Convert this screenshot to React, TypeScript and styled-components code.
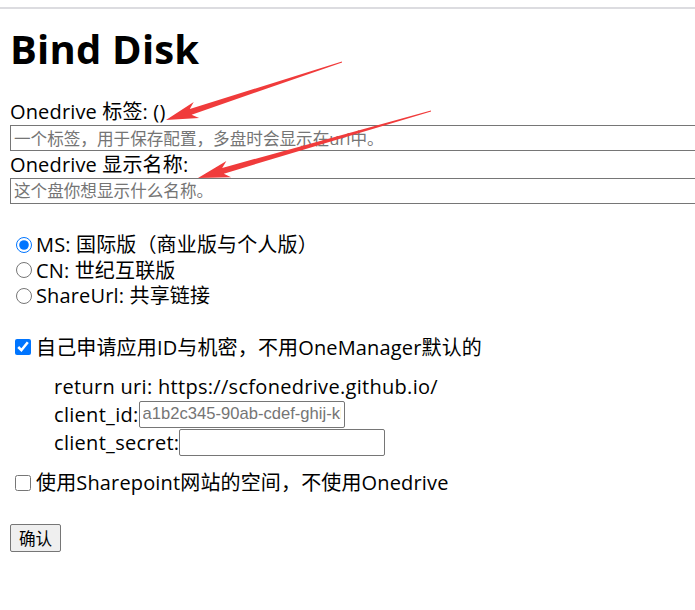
import React from "react"
import styled, { createGlobalStyle } from "styled-components"

const GlobalStyle = createGlobalStyle`
  html, body {
    margin: 0;
    padding: 0;
    background: #ffffff;
    overflow: hidden;
  }
  body {
    font-family: "Open Sans", "Noto Sans CJK SC", sans-serif;
    font-size: 20px;
    color: #000000;
  }
`

type Point = [number, number]

// tapered shaft + head, tip points at the field
function arrowPoints(tip: Point, tail: Point) {
  const dx = tail[0] - tip[0]
  const dy = tail[1] - tip[1]
  const len = Math.sqrt(dx * dx + dy * dy)
  const ux = dx / len
  const uy = dy / len
  const nx = -uy
  const ny = ux
  const headLen = 32
  const headHalf = 8.5
  const neckHalf = 3
  const tailHalf = 0.4
  const bx = tip[0] + ux * headLen
  const by = tip[1] + uy * headLen
  const pts: Point[] = [
    tip,
    [bx + nx * headHalf, by + ny * headHalf],
    [bx - ux * 6 + nx * neckHalf, by - uy * 6 + ny * neckHalf],
    [tail[0] + nx * tailHalf, tail[1] + ny * tailHalf],
    [tail[0] - nx * tailHalf, tail[1] - ny * tailHalf],
    [bx - ux * 6 - nx * neckHalf, by - uy * 6 - ny * neckHalf],
    [bx - nx * headHalf, by - ny * headHalf],
  ]
  return pts.map(p => `${p[0].toFixed(1)},${p[1].toFixed(1)}`).join(" ")
}

const App: React.FC = () => {
  return (
    <>
      <GlobalStyle />
      <Frame>
        <TopRule />
        <Page>
          <Title>Bind Disk</Title>
          <Label>Onedrive 标签: ()</Label>
          <WideInput placeholder="一个标签，用于保存配置，多盘时会显示在url中。" />
          <Label>Onedrive 显示名称:</Label>
          <WideInput placeholder="这个盘你想显示什么名称。" />

          <Group $gap={28}>
            <Choice>
              <Radio type="radio" name="drive" defaultChecked />
              MS: 国际版（商业版与个人版）
            </Choice>
            <Choice>
              <Radio type="radio" name="drive" />
              CN: 世纪互联版
            </Choice>
            <Choice>
              <Radio type="radio" name="drive" />
              ShareUrl: 共享链接
            </Choice>
          </Group>

          <Group $gap={26}>
            <Choice>
              <Check type="checkbox" defaultChecked />
              自己申请应用ID与机密，不用OneManager默认的
            </Choice>
            <Indent>
              <Line>return uri: https://scfonedrive.github.io/</Line>
              <Line>
                client_id:
                <SmallInput placeholder="a1b2c345-90ab-cdef-ghij-klmnopqrstuv" />
              </Line>
              <Line>
                client_secret:
                <SmallInput />
              </Line>
            </Indent>
          </Group>

          <SpacedChoice>
            <Check type="checkbox" />
            使用Sharepoint网站的空间，不使用Onedrive
          </SpacedChoice>

          <SubmitButton type="button">确认</SubmitButton>
        </Page>

        <Overlay width="695" height="610" viewBox="0 0 695 610">
          <polygon points={arrowPoints([166, 120], [342, 62])} fill="#f03b3b" />
          <polygon points={arrowPoints([198, 178], [431, 111])} fill="#f03b3b" />
        </Overlay>
      </Frame>
    </>
  )
}

const Frame = styled.div`
  position: relative;
  width: 695px;
  height: 610px;
  overflow: hidden;
`

const TopRule = styled.div`
  height: 7px;
  border-bottom: 2px solid #dcdce0;
`

const Page = styled.div`
  display: flex;
  flex-direction: column;
  align-items: flex-start;
  padding: 0 10px;
`

const Title = styled.h1`
  font-size: 40px;
  font-weight: 700;
  line-height: 52px;
  margin: 14px 0 24px 0;
  letter-spacing: 0.2px;
`

const Label = styled.div`
  line-height: 26px;
  height: 26px;
  letter-spacing: 0.15px;
`

const WideInput = styled.input`
  box-sizing: content-box;
  width: calc(100% + 12px);
  height: 22px;
  padding: 1px 3px;
  margin: 0 0 0.5px 0;
  border: 1px solid #767676;
  border-radius: 0;
  font-family: "Open Sans", "Noto Sans CJK SC", sans-serif;
  font-size: 16.6px;
  outline: none;
  &::placeholder {
    color: #757575;
  }
`

const Group = styled.div<{ $gap: number }>`
  display: flex;
  flex-direction: column;
  margin-top: ${props => props.$gap}px;
`

const Choice = styled.label`
  display: flex;
  align-items: center;
  line-height: 25.5px;
  height: 25.5px;
  white-space: nowrap;
  letter-spacing: 0.15px;
`

const SpacedChoice = styled(Choice)`
  margin-top: 14px;
`

const Radio = styled.input`
  width: 16px;
  height: 16px;
  margin: 0 4px 0 6px;
`

const Check = styled.input`
  width: 16px;
  height: 16px;
  margin: 0 5px 0 5px;
`

const Indent = styled.div`
  display: flex;
  flex-direction: column;
  padding: 12px 0 0 44px;
`

const Line = styled.div`
  display: flex;
  align-items: center;
  height: 28px;
  white-space: nowrap;
  letter-spacing: 0.3px;
`

const SmallInput = styled.input`
  box-sizing: border-box;
  width: 206px;
  height: 27px;
  padding: 1px 3px;
  border: 1px solid #767676;
  border-radius: 2px;
  font-family: "Liberation Sans", Arial, sans-serif;
  font-size: 16.6px;
  letter-spacing: 0;
  outline: none;
  &::placeholder {
    color: #757575;
  }
`

const SubmitButton = styled.button`
  margin-top: 28px;
  height: 28px;
  padding: 0 8px;
  border: 1px solid #767676;
  border-radius: 2px;
  background: #efefef;
  font-family: "Noto Sans CJK SC", sans-serif;
  font-size: 16.6px;
  color: #000000;
`

const Overlay = styled.svg`
  position: absolute;
  left: 0;
  top: 0;
  pointer-events: none;
`

export default App
